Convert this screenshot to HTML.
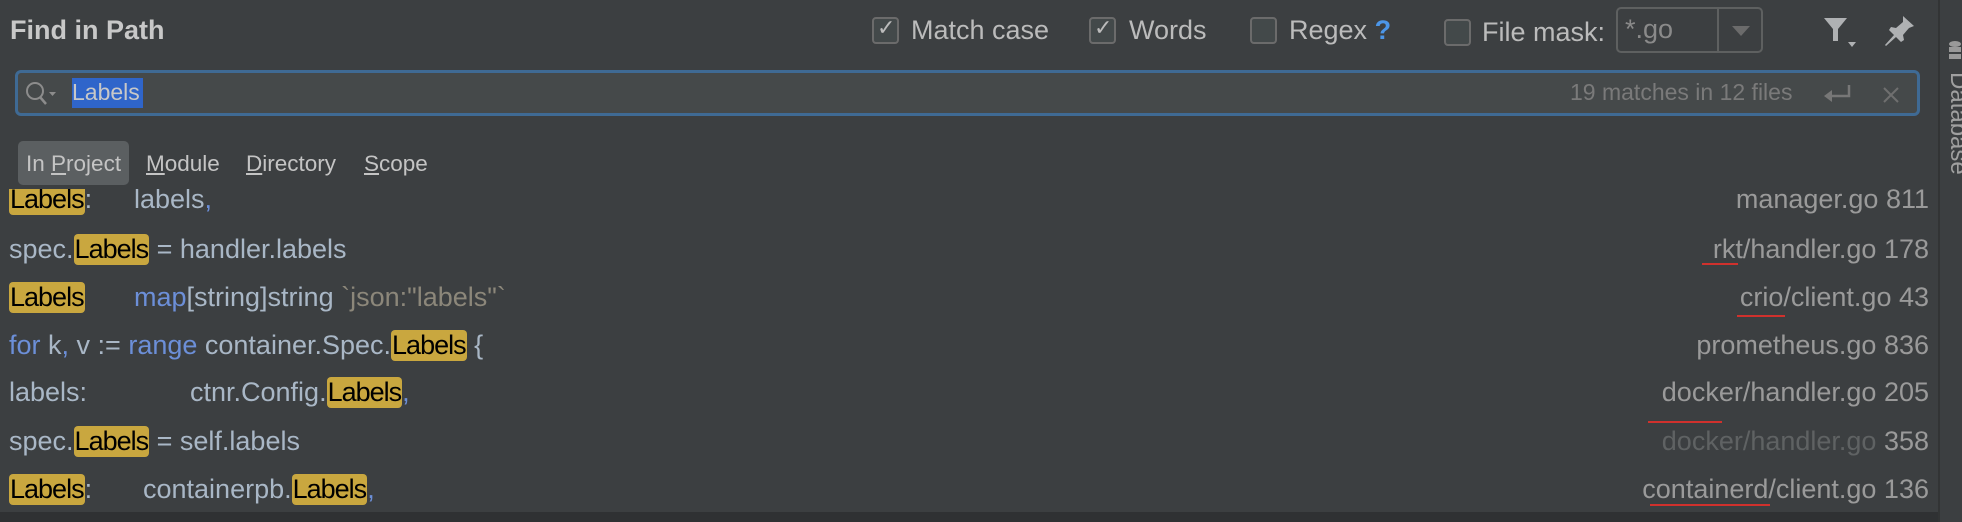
<!DOCTYPE html>
<html><head><meta charset="utf-8"><style>
*{margin:0;padding:0;box-sizing:border-box}
body{width:1962px;height:522px;background:#3c3f41;font-family:"Liberation Sans",sans-serif;position:relative;overflow:hidden;color:#bbbbbb}
.a{position:absolute;white-space:nowrap}
.cb{position:absolute;width:27px;height:27px;border:2px solid #6b6b6b;border-radius:4px;background:#43494a;top:17px}
.cbt{font-size:27px;top:14px;line-height:32px}
.hl{display:inline-block;background:#c9a73f;color:#000;border-radius:4px;line-height:31px;letter-spacing:-1px;padding:0 1px}
.row{position:absolute;left:9px;height:48px;line-height:48px;font-size:27px;color:#a9b7c6;white-space:nowrap;width:1920px}
.kw{color:#6c8fd8}
.st{color:#8c877a}
.f{position:absolute;right:0;color:#9a9a9a;font-size:27px}
.ul{position:absolute;height:2px;background:#d0312d}
</style></head><body>
<div class="a" style="left:10px;top:15px;font-size:27px;font-weight:bold;color:#c8c8c8">Find in Path</div>

<div class="cb" style="left:872px"></div><div class="a" style="left:877px;top:15px;font-size:22px;color:#bbb">✓</div>
<div class="a cbt" style="left:911px">Match case</div>
<div class="cb" style="left:1089px"></div><div class="a" style="left:1094px;top:15px;font-size:22px;color:#bbb">✓</div>
<div class="a cbt" style="left:1129px">Words</div>
<div class="cb" style="left:1250px"></div>
<div class="a cbt" style="left:1289px">Regex <b style="color:#4c96e8">?</b></div>
<div class="cb" style="left:1444px;top:19px"></div>
<div class="a cbt" style="left:1482px;top:16px">File mask:</div>
<div class="a" style="left:1616px;top:7px;width:147px;height:46px;border:2px solid #5e6060;border-radius:5px"></div>
<div class="a" style="left:1717px;top:8px;width:2px;height:44px;background:#5e6060"></div>
<div class="a" style="left:1625px;top:14px;font-size:27px;color:#8a8a8a">*.go</div>
<div class="a" style="left:1732px;top:26px;width:0;height:0;border-left:9px solid transparent;border-right:9px solid transparent;border-top:10px solid #6b6b6b"></div>
<svg class="a" style="left:1820px;top:14px" width="40" height="34" viewBox="0 0 40 34"><path d="M4 4h23l-9 11v12h-5V15z" fill="#afb1b3"/><path d="M28 28h8l-4 5z" fill="#afb1b3"/></svg>
<svg class="a" style="left:1882px;top:14px" width="34" height="32" viewBox="0 0 34 32"><path d="M21 2l11 10-5 2-6 7 1 5-3 2-5-5-10 9-1-1 9-10-5-5 2-3 5 1 7-6z" fill="#afb1b3"/></svg>

<div class="a" style="left:15px;top:70px;width:1905px;height:46px;border:3px solid #3f6a94;border-radius:6px;background:#45494a"></div>
<svg class="a" style="left:24px;top:80px" width="34" height="28" viewBox="0 0 34 28"><circle cx="11" cy="11" r="8" stroke="#8c8c8c" stroke-width="2" fill="none"/><path d="M16 17l6 7" stroke="#8c8c8c" stroke-width="2.5"/><path d="M25 12h7l-3.5 4z" fill="#8c8c8c"/></svg>
<div class="a" style="left:72px;top:78px;height:30px;width:71px;background:#2f65ca"></div>
<div class="a" style="left:72px;top:79px;font-size:23px;color:#c8c8c8">Labels</div>
<div class="a" style="left:1570px;top:79px;font-size:23px;color:#7a7a7a">19 matches in 12 files</div>
<svg class="a" style="left:1822px;top:82px" width="32" height="24" viewBox="0 0 32 24"><path d="M27 3v11H6" stroke="#777" stroke-width="2.5" fill="none"/><path d="M2 14l8-6v12z" fill="#777"/></svg>
<svg class="a" style="left:1882px;top:86px" width="18" height="18" viewBox="0 0 18 18"><path d="M2 2l14 14M16 2L2 16" stroke="#6f6f6f" stroke-width="2"/></svg>

<div class="a" style="left:18px;top:141px;width:111px;height:44px;background:#5b5f61;border-radius:5px"></div>
<div class="a" style="left:26px;top:151px;font-size:22.5px;color:#c4c4c4">In <u>P</u>roject</div>
<div class="a" style="left:146px;top:151px;font-size:22.5px;color:#c4c4c4"><u>M</u>odule</div>
<div class="a" style="left:246px;top:151px;font-size:22.5px;color:#c4c4c4"><u>D</u>irectory</div>
<div class="a" style="left:364px;top:151px;font-size:22.5px;color:#c4c4c4"><u>S</u>cope</div>

<div class="a" style="left:0;top:189px;width:1936px;height:323px;overflow:hidden">
 <div class="row" style="top:-14px"><span class="hl">Labels</span>:<span class="a" style="left:125px">labels<span class="kw">,</span></span><span class="f">manager.go 811</span></div>
 <div class="row" style="top:36px">spec.<span class="hl">Labels</span> = handler.labels<span class="f">rkt/handler.go 178</span></div>
 <div class="row" style="top:84px"><span class="hl">Labels</span><span class="a" style="left:125px"><span class="kw">map</span>[string]string <span class="st">`json:"labels"`</span></span><span class="f">crio/client.go 43</span></div>
 <div class="row" style="top:132px"><span class="kw">for</span> k<span class="kw">,</span> v := <span class="kw">range</span> container.Spec.<span class="hl">Labels</span> {<span class="f">prometheus.go 836</span></div>
 <div class="row" style="top:179px">labels:<span class="a" style="left:181px">ctnr.Config.<span class="hl">Labels</span><span class="kw">,</span></span><span class="f">docker/handler.go 205</span></div>
 <div class="row" style="top:228px">spec.<span class="hl">Labels</span> = self.labels<span class="f"><span style="color:#5f6263">docker/handler.go</span> 358</span></div>
 <div class="row" style="top:276px"><span class="hl">Labels</span>:<span class="a" style="left:134px">containerpb.<span class="hl">Labels</span><span class="kw">,</span></span><span class="f">containerd/client.go 136</span></div>
</div>
<div class="ul" style="left:1702px;top:263px;width:36px"></div>
<div class="ul" style="left:1737px;top:315px;width:48px"></div>
<div class="ul" style="left:1648px;top:421px;width:74px"></div>
<div class="ul" style="left:1650px;top:504px;width:120px"></div>

<div class="a" style="left:0;top:512px;width:1940px;height:10px;background:#2f3133"></div>
<div class="a" style="left:1938px;top:0;width:2px;height:522px;background:#323435"></div>
<svg class="a" style="left:1948px;top:40px" width="14" height="24" viewBox="0 0 14 24"><ellipse cx="7" cy="4" rx="6" ry="3" fill="#999"/><rect x="1" y="7" width="12" height="5" fill="#999"/><rect x="1" y="14" width="12" height="5" fill="#999"/></svg>
<div class="a" style="left:1948px;top:72px;font-size:24px;color:#a0a0a0;transform-origin:0 0;transform:translate(24px,0) rotate(90deg)">Database</div>
</body></html>
